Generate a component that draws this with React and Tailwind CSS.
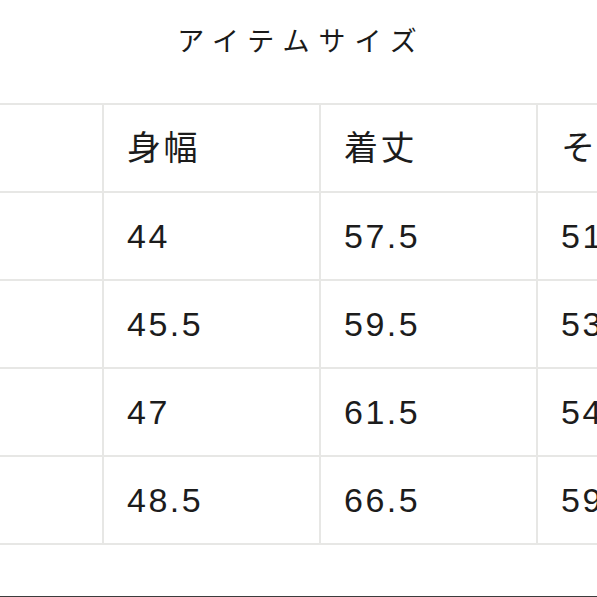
const headers = ['', '身幅', '着丈', 'そで丈'];
const rows = [
    ['44', '57.5', '51.5'],
    ['45.5', '59.5', '53'],
    ['47', '61.5', '54.5'],
    ['48.5', '66.5', '59'],
];

function Cell({ children }) {
    return (
        <div className="w-[217px] h-[88px] shrink-0 flex items-center pl-[23px] border-r-2 border-b-2 border-[#e7e7e5] text-[34px] tracking-[2.5px] text-[#1c1c1c] whitespace-nowrap overflow-hidden">
            {children}
        </div>
    );
}

export default function App() {
    return (
        <div
            className="w-[597px] h-[597px] bg-white overflow-hidden flex flex-col"
            style={{ fontFamily: '"Liberation Sans", "Noto Sans CJK JP", sans-serif' }}
        >
            {/* Title */}
            <div className="h-[103px] shrink-0 flex items-start justify-center pt-[24px]">
                <h1 className="text-[27px] leading-[36px] tracking-[9px] pl-[6px] text-[#1a1a1a] font-normal">
                    アイテムサイズ
                </h1>
            </div>

            {/* Size table */}
            <div className="ml-[-113px] border-t-2 border-[#e7e7e5] flex flex-col w-max">
                <div className="flex">
                    {headers.map((h, i) => (
                        <Cell key={i}>{h}</Cell>
                    ))}
                </div>
                {rows.map((r, ri) => (
                    <div key={ri} className="flex">
                        <Cell />
                        {r.map((v, i) => (
                            <Cell key={i}>{v}</Cell>
                        ))}
                    </div>
                ))}
            </div>

            <div className="mt-auto h-px bg-[#3c3c3c]" />
        </div>
    );
}
